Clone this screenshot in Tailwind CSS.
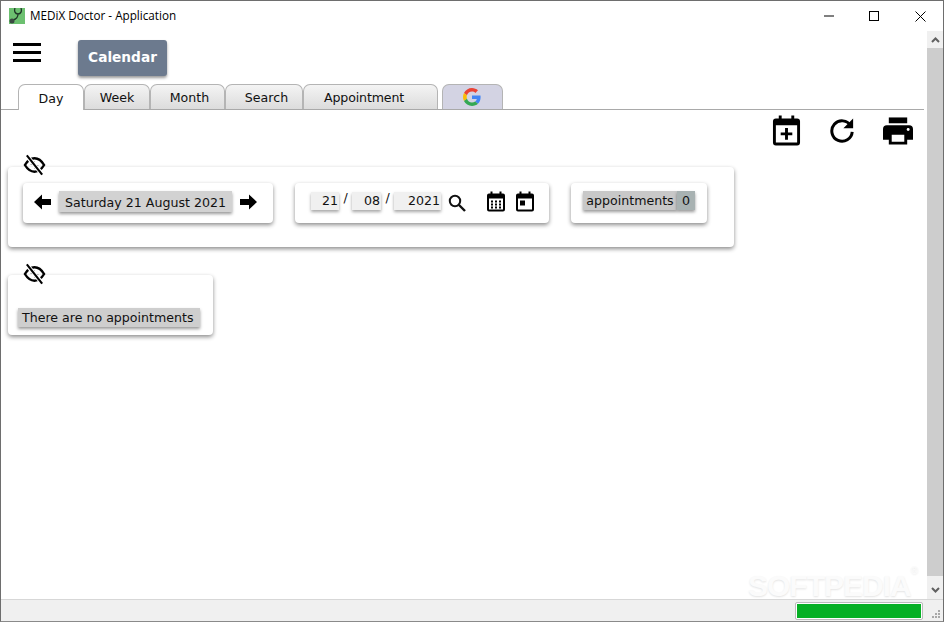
<!DOCTYPE html>
<html>
<head>
<meta charset="utf-8">
<script src="https://cdn.jsdelivr.net/npm/@tailwindcss/browser@4"></script>
</head>
<body class="m-0 overflow-hidden bg-white">
<div class="flex h-[622px] w-[944px] flex-col border border-[#6e6e6e] border-b-[#8a8a8a] font-['DejaVu_Sans',sans-serif] text-[12.6px] text-[#111]">
  <!-- title bar -->
  <div class="flex h-[30px] shrink-0 items-center">
    <svg class="ml-[8px] h-[16px] w-[16px]" viewBox="0 0 16 16"><rect width="16" height="16" fill="#6cc070"/><path d="M6 0c-1 3 0 6 3 6s4-3 3-6M9 6c0 3-1 5-5 6" fill="none" stroke="#1f3527" stroke-width="1.300"/><circle cx="3" cy="13" r="2.500" fill="#3b4a42"/></svg>
    <span class="ml-[5px] font-['Open_Sans',sans-serif] text-[11.7px] text-black">MEDiX Doctor - Application</span>
    <div class="ml-auto flex items-center">
      <svg class="mr-[33px] h-[12px] w-[12px]" viewBox="0 0 12 12"><path d="M1 6h10" stroke="#000" stroke-width="1"/></svg>
      <svg class="mr-[34px] h-[12px] w-[12px]" viewBox="0 0 12 12"><rect x="1.500" y="1.500" width="9" height="9" fill="none" stroke="#000"/></svg>
      <svg class="mr-[16px] h-[13px] w-[13px]" viewBox="0 0 13 13"><path d="M1.500 1.500l10 10M11.500 1.500l-10 10" stroke="#000" stroke-width="1"/></svg>
    </div>
  </div>
  <!-- main area -->
  <div class="flex min-h-0 flex-1">
    <div class="min-w-0 flex-1">
      <div class="flex h-[53px] items-start pt-[9px]">
        <div class="ml-[12px] mt-[3px] flex h-[19px] w-[28px] flex-col justify-between">
          <div class="h-[3px] bg-black"></div><div class="h-[3px] bg-black"></div><div class="h-[3px] bg-black"></div>
        </div>
        <button class="ml-[37px] flex h-[36px] w-[89px] items-center justify-center rounded-[3px] bg-[#6c7a8e] pb-[2px] text-[13.700px] font-bold text-white shadow-[0_2px_3px_rgba(0,0,0,0.4)]">Calendar</button>
      </div>
      <!-- tabs -->
      <div class="flex h-[26px] items-end border-b border-[#a9a9a9] pl-[17px]">
        <div class="z-10 -mb-px flex h-[26px] w-[66px] items-center justify-center rounded-t-[7px] border border-b-0 border-[#b4b4b4] bg-white pt-[3px]">Day</div>
        <div class="flex h-[25px] w-[66px] items-center justify-center rounded-t-[7px] border border-b-0 border-[#b4b4b4] bg-linear-to-b from-[#f4f4f4] to-[#dcdcdc] pt-[3px]">Week</div>
        <div class="flex h-[25px] w-[75px] items-center justify-center rounded-t-[7px] border border-b-0 border-[#b4b4b4] bg-linear-to-b from-[#f4f4f4] to-[#dcdcdc] pl-[4px] pt-[3px]">Month</div>
        <div class="flex h-[25px] w-[78px] items-center justify-center rounded-t-[7px] border border-b-0 border-[#b4b4b4] bg-linear-to-b from-[#f4f4f4] to-[#dcdcdc] pl-[5px] pt-[3px]">Search</div>
        <div class="flex h-[25px] w-[135px] items-center rounded-t-[7px] border border-b-0 border-[#b4b4b4] bg-linear-to-b from-[#f4f4f4] to-[#dcdcdc] pl-[20px] pt-[3px] tracking-[-0.15px]">Appointment</div>
        <div class="ml-[4px] flex h-[25px] w-[61px] items-center justify-center rounded-t-[7px] border border-b-0 border-[#b4b4b4] bg-[#d3d3e3] pr-[2px]">
          <svg class="h-[18px] w-[18px]" viewBox="0 0 48 48"><path fill="#EA4335" d="M24 9.500c3.500 0 6.700 1.300 9.100 3.500l6.800-6.800C35.800 2.400 30.300 0 24 0 14.600 0 6.500 5.400 2.600 13.200l7.900 6.200C12.400 13.700 17.700 9.500 24 9.500z"/><path fill="#4285F4" d="M46.900 24.500c0-1.600-.1-3.100-.4-4.500H24v9h12.900c-.6 3-2.200 5.500-4.700 7.200l7.700 6c4.400-4.100 7-10.200 7-17.700z"/><path fill="#FBBC05" d="M10.500 28.600c-.5-1.500-.8-3-.8-4.600s.3-3.200.8-4.600l-7.900-6.200C1 16.500 0 20.100 0 24s.9 7.500 2.600 10.800l7.900-6.200z"/><path fill="#34A853" d="M24 48c6.500 0 11.900-2.100 15.900-5.800l-7.700-6c-2.200 1.400-4.900 2.300-8.200 2.300-6.300 0-11.600-4.200-13.500-9.900l-7.900 6.200C6.500 42.600 14.600 48 24 48z"/></svg>
        </div>
      </div>
      <!-- toolbar -->
      <div class="flex h-[37px] items-start justify-end pt-[4px]">
        <svg class="mr-[28px] h-[32px] w-[29px]" viewBox="0 0 30 32"><path fill-rule="evenodd" d="M7 1h3v3h10V1h3v3h3a3 3 0 0 1 3 3v22a3 3 0 0 1-3 3H4a3 3 0 0 1-3-3V7a3 3 0 0 1 3-3h3zM4 11v18h22V11zM13.500 14h3v4.500H21v3h-4.500V26h-3v-4.500H9v-3h4.500z"/></svg>
        <svg class="mr-[28px] mt-[3px] h-[26px] w-[26px]" viewBox="0 0 28 28"><path d="M23.500 9.500A11 11 0 1 0 25 16" fill="none" stroke="#000" stroke-width="3.200"/><path d="M26 1.500V12H15.500z"/></svg>
        <svg class="mr-[11px] mt-[3px] h-[28px] w-[30px]" viewBox="0 0 31 28"><rect x="6" y="0" width="19" height="6"/><path fill-rule="evenodd" d="M4 8h23a4 4 0 0 1 4 4v11h-6v5H6v-5H0V12a4 4 0 0 1 4-4zM9 18v7h13v-7z"/><circle cx="26" cy="12.500" r="1.500" fill="#fff"/></svg>
      </div>
      <!-- filter card -->
      <div class="relative ml-[7px] mt-[20px] h-[80px] w-[726px] rounded-[4px] bg-white pl-[15px] pt-[16px] shadow-[0_2px_4px_rgba(0,0,0,0.45)]">
        <svg class="absolute left-[15px] top-[-13px] h-[22px] w-[23px]" viewBox="0 0 24 22"><path d="M2 11c3-5 6.500-7 10-7s7 2 10 7c-3 5-6.500 7-10 7s-7-2-10-7z" fill="none" stroke="#000" stroke-width="2.500"/><path d="M9 11a3 3 0 0 1 3-3M15 11a3 3 0 0 1-3 3" fill="none" stroke="#000" stroke-width="1.800"/><path d="M4 1.500l16 19" stroke="#fff" stroke-width="4.500"/><path d="M4 1l16 20" stroke="#000" stroke-width="2.200"/></svg>
        <div class="flex items-start">
          <div class="flex h-[40px] w-[250px] items-start rounded-[4px] bg-white pl-[11px] pt-[8px] shadow-[0_2px_4px_rgba(0,0,0,0.45)]">
            <svg class="mt-[3px] h-[16px] w-[17px]" viewBox="0 0 17 16"><path d="M0 8l8-7.500V5h9v6H8v4.500z"/></svg>
            <span class="ml-[8px] flex h-[21px] w-[173px] items-center justify-center bg-[#d2d2d2] pt-[3px] shadow-[0_2px_3px_rgba(0,0,0,0.4)]">Saturday 21 August 2021</span>
            <svg class="ml-[8px] mt-[3px] h-[16px] w-[17px]" viewBox="0 0 17 16"><path d="M17 8L9 .5V5H0v6h9v4.500z"/></svg>
          </div>
          <div class="ml-[22px] flex h-[40px] w-[254px] items-start rounded-[4px] bg-white pl-[16px] pt-[9px] shadow-[0_2px_4px_rgba(0,0,0,0.45)]">
            <span class="flex h-[18px] w-[28px] items-center justify-end bg-[#f0f0f0] pr-[1px] shadow-[0_2px_3px_rgba(0,0,0,0.35)]">21</span>
            <span class="mx-[3.500px] -mt-[3px] w-[6px] text-center">/</span>
            <span class="flex h-[18px] w-[29px] items-center justify-end bg-[#f0f0f0] pr-[1px] shadow-[0_2px_3px_rgba(0,0,0,0.35)]">08</span>
            <span class="mx-[3.500px] -mt-[3px] w-[6px] text-center">/</span>
            <span class="flex h-[18px] w-[47px] items-center justify-end bg-[#f0f0f0] pr-[1px] shadow-[0_2px_3px_rgba(0,0,0,0.35)]">2021</span>
            <svg class="ml-[7px] mt-[2px] h-[18px] w-[18px]" viewBox="0 0 18 18"><circle cx="7" cy="7" r="5.200" fill="none" stroke="#111" stroke-width="2"/><path d="M11 11l6 6" stroke="#111" stroke-width="2.400"/></svg>
            <svg class="ml-[21px] -mt-px h-[21px] w-[18px]" viewBox="0 0 18 20"><path fill-rule="evenodd" d="M3.500 0h2v2h7V0h2v2H16a2 2 0 0 1 2 2v14a2 2 0 0 1-2 2H2a2 2 0 0 1-2-2V4a2 2 0 0 1 2-2h1.500zM2 7v11h14V7z"/><path d="M4 9h2v2H4zM8 9h2v2H8zM12 9h2v2h-2zM4 12h2v2H4zM8 12h2v2H8zM12 12h2v2h-2zM4 15h2v2H4zM8 15h2v2H8zM12 15h2v2h-2z"/></svg>
            <svg class="ml-[11px] -mt-px h-[21px] w-[18px]" viewBox="0 0 18 20"><path fill-rule="evenodd" d="M3.500 0h2v2h7V0h2v2H16a2 2 0 0 1 2 2v14a2 2 0 0 1-2 2H2a2 2 0 0 1-2-2V4a2 2 0 0 1 2-2h1.500zM2 7v11h14V7z"/><rect x="4" y="9" width="5" height="5"/></svg>
          </div>
          <div class="ml-[22px] flex h-[40px] w-[136px] items-start rounded-[4px] bg-white pl-[12px] pt-[8px] shadow-[0_2px_4px_rgba(0,0,0,0.45)]">
            <span class="flex h-[19px] w-[94px] items-center justify-center bg-[#c8c8c8] pt-[1px] shadow-[0_2px_3px_rgba(0,0,0,0.4)]">appointments</span>
            <span class="flex h-[19px] w-[18px] items-center justify-center bg-[#a8b2b2] pt-[1px] shadow-[0_2px_3px_rgba(0,0,0,0.4)]">0</span>
          </div>
        </div>
      </div>
      <!-- list card -->
      <div class="relative ml-[7px] mt-[28px] flex h-[60px] w-[205px] items-end rounded-[4px] bg-white pb-[8px] pl-[10px] shadow-[0_2px_4px_rgba(0,0,0,0.45)]">
        <svg class="absolute left-[15px] top-[-12px] h-[22px] w-[23px]" viewBox="0 0 24 22"><path d="M2 11c3-5 6.500-7 10-7s7 2 10 7c-3 5-6.500 7-10 7s-7-2-10-7z" fill="none" stroke="#000" stroke-width="2.500"/><path d="M9 11a3 3 0 0 1 3-3M15 11a3 3 0 0 1-3 3" fill="none" stroke="#000" stroke-width="1.800"/><path d="M4 1.500l16 19" stroke="#fff" stroke-width="4.500"/><path d="M4 1l16 20" stroke="#000" stroke-width="2.200"/></svg>
        <span class="flex h-[19px] w-[182px] items-center bg-[#cecece] pl-[4px] pt-[2px] shadow-[0_2px_3px_rgba(0,0,0,0.4)]">There are no appointments</span>
      </div>
    </div>
    <!-- scrollbar -->
    <div class="ml-[3px] flex w-[16px] shrink-0 flex-col bg-[#f0f0f0]">
      <div class="flex h-[17px] shrink-0 items-center justify-center"><svg class="h-[6px] w-[9px]" viewBox="0 0 9 6"><path d="M1 5l3.500-3.500L8 5" fill="none" stroke="#606060" stroke-width="2"/></svg></div>
      <div class="flex-1 bg-[#cdcdcd]"></div>
      <div class="flex h-[23px] shrink-0 items-end justify-center pb-[6px]"><svg class="h-[6px] w-[9px]" viewBox="0 0 9 6"><path d="M1 1l3.500 3.500L8 1" fill="none" stroke="#606060" stroke-width="2"/></svg></div>
    </div>
  </div>
  <!-- status bar -->
  <div class="flex h-[22px] shrink-0 items-center border-t border-[#d7d7d7] bg-[#f0f0f0]">
    <div class="ml-[794px] h-[18px] w-[128px] rounded-[2px] border border-[#bcbcbc] bg-white p-px"><div class="h-full bg-[#06b025]"></div></div>
    <svg class="ml-auto mr-[2px] mt-[7px] h-[10px] w-[10px]" viewBox="0 0 10 10" fill="#a8a8a8"><rect x="7" y="1" width="2" height="2"/><rect x="4" y="4" width="2" height="2"/><rect x="7" y="4" width="2" height="2"/><rect x="1" y="7" width="2" height="2"/><rect x="4" y="7" width="2" height="2"/><rect x="7" y="7" width="2" height="2"/></svg>
  </div>
</div>
<div class="pointer-events-none absolute left-[748px] top-[563px] font-['Liberation_Sans',sans-serif] text-[30px] font-bold tracking-[-1px] text-[#fbfbfb] [text-shadow:0_1px_2px_#e4e4e4]">SOFTPEDIA<span class="align-top text-[10px] font-normal">®</span></div>
</body>
</html>
